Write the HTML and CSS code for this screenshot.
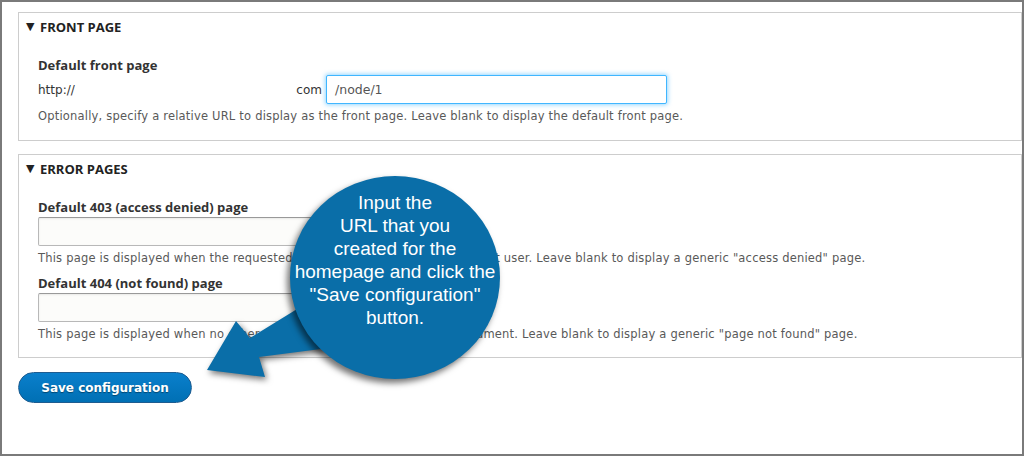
FILE: index.html
```html
<!DOCTYPE html>
<html>
<head>
<meta charset="utf-8">
<link rel="stylesheet" href="styles.css">
</head>
<body>
<div class="frame">
  <section class="panel panel-front">
    <div class="legend"><span class="tri">▼</span>FRONT PAGE</div>
    <div class="panel-body">
      <div class="label">Default front page</div>
      <div class="url-row">
        <div class="prefix"><span>http://</span><span>com</span></div>
        <div class="input focused">/node/1</div>
      </div>
      <div class="desc">Optionally, specify a relative URL to display as the front page. Leave blank to display the default front page.</div>
    </div>
  </section>
  <section class="panel panel-error">
    <div class="legend"><span class="tri">▼</span>ERROR PAGES</div>
    <div class="panel-body">
      <div class="label">Default 403 (access denied) page</div>
      <div class="input plain"></div>
      <div class="desc">This page is displayed when the requested document is denied to the current user. Leave blank to display a generic "access denied" page.</div>
      <div class="label second">Default 404 (not found) page</div>
      <div class="input plain"></div>
      <div class="desc">This page is displayed when no other content matches the requested document. Leave blank to display a generic "page not found" page.</div>
    </div>
  </section>
  <div class="actions"><button class="save">Save configuration</button></div>

  <svg class="arrow" width="1024" height="456" viewBox="0 0 1024 456">
    <polygon points="207,370 236,321 250,338 302,306 342,326 344,346 259,357 265,377" fill="#0a6ea8"/>
  </svg>
  <div class="bubble">
    <span>Input the</span>
    <span>URL that you</span>
    <span>created for the</span>
    <span>homepage and click the</span>
    <span>"Save configuration"</span>
    <span>button.</span>
  </div>
</div>
</body>
</html>
```
FILE: styles.css
```css
html, body {
  margin: 0;
  padding: 0;
  background: #fff;
}
.frame {
  position: relative;
  box-sizing: border-box;
  width: 1024px;
  height: 456px;
  border: 2px solid #7a7a7a;
  padding: 10px 0 0 16px;
  font-family: "DejaVu Sans", sans-serif;
  color: #333;
  overflow: hidden;
}
.panel {
  border: 1px solid #cdcdcd;
  background: #fff;
}
.panel-error {
  margin-top: 13px;
}
.legend {
  padding: 6px 0 0 7px;
  line-height: 16px;
  height: 16px;
  font-family: "Open Sans", sans-serif;
  font-weight: 700;
  font-size: 13px;
  color: #222;
  display: flex;
  align-items: center;
}
.tri {
  font-size: 11px;
  width: 14px;
  font-family: "DejaVu Sans", sans-serif;
}
.panel-body {
  padding: 21px 20px 16px 19px;
}
.panel-error .panel-body {
  padding-bottom: 15px;
}
.label {
  font-family: "Open Sans", sans-serif;
  font-weight: 700;
  font-size: 13px;
  line-height: 18px;
  color: #333;
}
.label.second {
  margin-top: 8px;
}
.url-row {
  display: flex;
  align-items: center;
  margin-top: 1px;
}
.prefix {
  width: 284px;
  display: flex;
  justify-content: space-between;
  font-size: 12px;
  color: #333;
  margin-right: 4px;
}
.input {
  box-sizing: border-box;
  height: 29px;
  width: 341px;
  border-radius: 2px;
  font-size: 12.5px;
  line-height: 27px;
  padding-left: 8px;
  color: #555;
  margin-top: 1px;
}
.url-row .input {
  margin-top: 0;
}
.input.focused {
  border: 1px solid #40b6ff;
  box-shadow: 0 0 4px 1px rgba(64, 182, 255, 0.55);
  background: #fff;
}
.input.plain {
  border: 1px solid #b8b8b8;
  border-top-color: #999;
  background: #fcfcfa;
  box-shadow: inset 0 1px 2px rgba(0, 0, 0, 0.08);
}
.desc {
  margin-top: 4px;
  font-size: 11.5px;
  line-height: 16px;
  color: #595959;
  letter-spacing: 0.2px;
}
.actions {
  margin-top: 14px;
}
.save {
  box-sizing: border-box;
  width: 174px;
  height: 31px;
  border-radius: 16px;
  border: 1px solid #1e5c90;
  background: linear-gradient(#0a7fcc, #0070b4);
  color: #fff;
  font-family: "DejaVu Sans", sans-serif;
  font-weight: 700;
  font-size: 12px;
  padding: 0;
  text-shadow: 0 1px 1px rgba(0, 0, 0, 0.4);
}
.arrow {
  position: absolute;
  left: -2px;
  top: -2px;
  filter: drop-shadow(2px 3px 3px rgba(0, 0, 0, 0.55));
}
.bubble {
  position: absolute;
  left: 288px;
  top: 174px;
  width: 210px;
  height: 203px;
  border-radius: 50%;
  background: #0a6ea8;
  box-shadow: -3px 4px 6px rgba(0, 0, 0, 0.55);
  display: flex;
  flex-direction: column;
  align-items: center;
  justify-content: center;
  color: #fff;
  font-family: "Liberation Sans", Arial, sans-serif;
  font-size: 19px;
  line-height: 23px;
  padding-bottom: 36px;
  box-sizing: border-box;
}
```
